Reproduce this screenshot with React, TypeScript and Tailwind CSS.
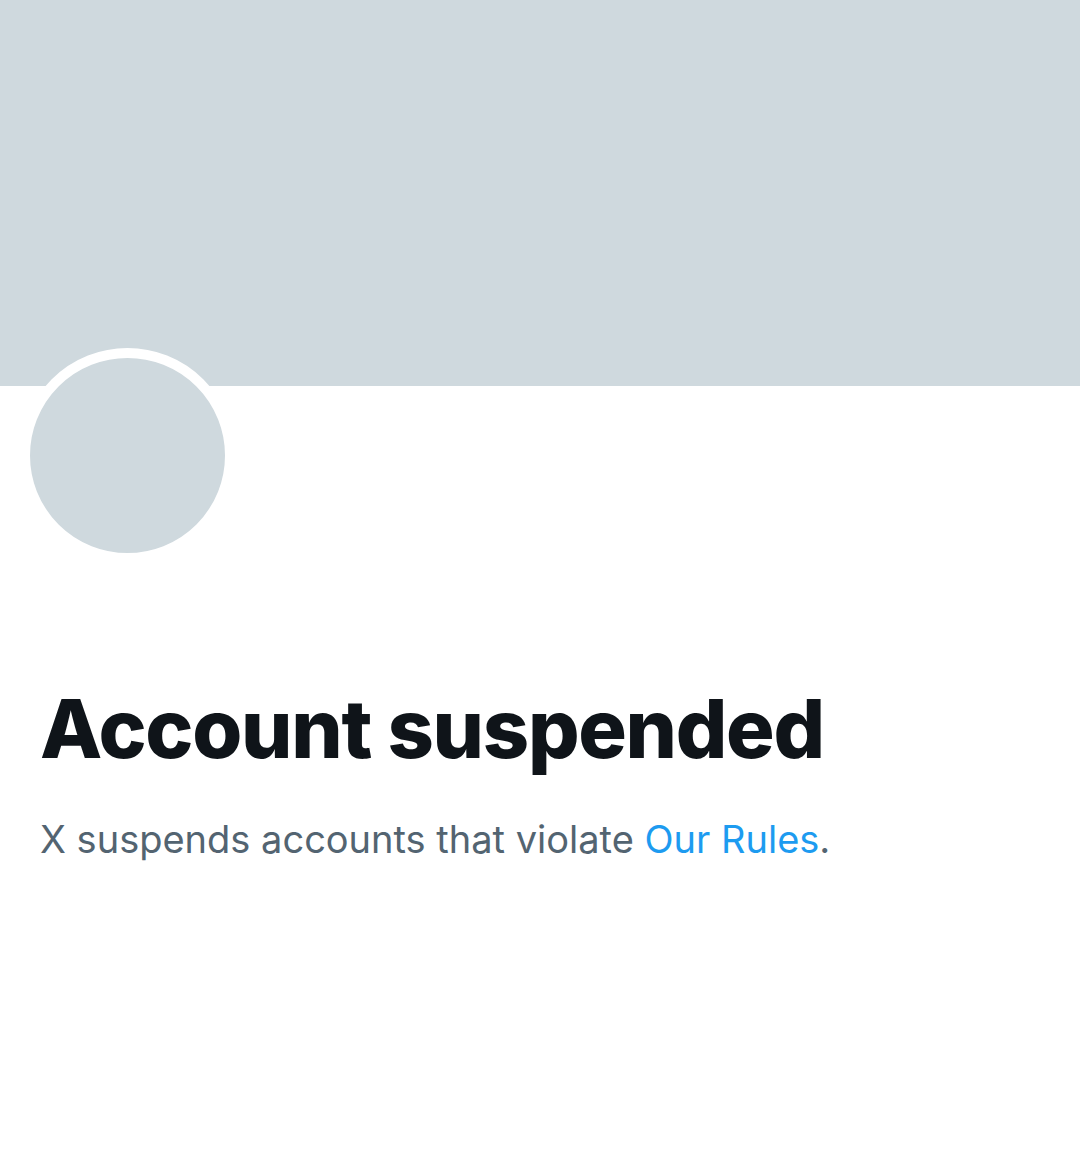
export default function App() {
  return (
    <main className="w-[1080px] h-[1176px] bg-white font-['Inter',sans-serif]">
      <div className="h-[386px] bg-[#cfd9de]" />
      <div className="px-[20px] -mt-[38px]">
        <div className="w-[215px] h-[215px] rounded-full bg-[#cfd9de] border-[10px] border-white" />
      </div>
      <div className="px-[40px] pt-[118px]">
        <h1 className="text-[81px] leading-[96px] font-extrabold text-[#0f1419] tracking-[-1.3px]">
          Account suspended
        </h1>
        <p className="mt-[40px] text-[38px] leading-[44px] text-[#536471]">
          X suspends accounts that violate <a className="text-[#1d9bf0]">Our Rules</a>.
        </p>
      </div>
    </main>
  );
}
